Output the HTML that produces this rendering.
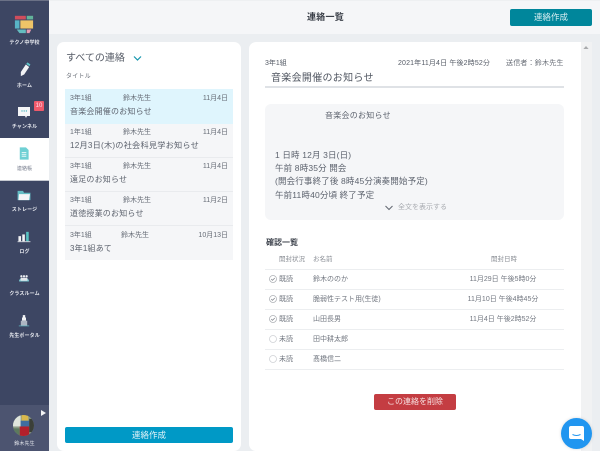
<!DOCTYPE html>
<html lang="ja"><head><meta charset="utf-8">
<style>
html,body{margin:0;padding:0;width:600px;height:451px;overflow:hidden;background:#ebeef1;font-family:"Liberation Sans","Noto Sans CJK JP",sans-serif;color:#555b66}
#p{position:absolute;left:0;top:0;width:600px;height:451px;overflow:hidden;background:#ebeef1}
#p div,#p span{position:absolute;white-space:nowrap;box-sizing:border-box}
svg{position:absolute;display:block}
.nav{left:0;width:49px;text-align:center;font-size:5px;font-weight:700;color:#e6e8ee;line-height:8px;letter-spacing:.1px}
.row{left:65px;width:168px;height:34px;background:#f5f6f8;border-bottom:1px solid #e9ebee}
.s{font-size:7px;line-height:10px;color:#666c76}
.t{left:5px;font-size:8px;line-height:13px;letter-spacing:.2px;color:#5d636e}
.b{font-size:8.5px;line-height:12px;color:#5d636e;left:275px;letter-spacing:.15px}
.tr{left:265px;width:299px;height:20px;border-bottom:1px solid #eceef0}
.c{font-size:7px;line-height:10px;color:#727780;top:5px}
</style></head><body><div id="p">
<!-- header -->
<div style="left:49px;top:0;width:551px;height:34px;background:#f5f6f8;border-top:1px solid #eef0f2"></div>
<div style="left:307px;top:11px;font-size:9px;line-height:12px;font-weight:700;letter-spacing:.25px;color:#3a3f48">連絡一覧</div>
<div style="left:510px;top:9px;width:82px;height:17px;background:#00869b;border-radius:2px;color:#d8eef2;font-size:8.5px;line-height:17px;text-align:center">連絡作成</div>

<!-- sidebar -->
<div style="left:0;top:0;width:49px;height:451px;background:#3d4663;border-top:1px solid #6b7186"></div>
<svg style="left:14px;top:14px" width="20" height="20" viewBox="0 0 22 20">
<path d="M1 1h12v4H1z" fill="#cf4d5c"/><path d="M14 1h7v4h-7z" fill="#62b39a"/>
<path d="M1 6h5v9H1z" fill="#58b4c6"/><path d="M7 6h14v9H7z" fill="#eec468"/>
<path d="M3 16h10v4H6z" fill="#64bcc0"/><path d="M14 16h5l-2 4h-3z" fill="#e59bb2"/>
</svg>
<div class="nav" style="top:39px">テクノ中学校</div>
<svg style="left:19px;top:62px" width="12" height="15" viewBox="0 0 14 18">
<path d="M2 12L8 3l4 3-6 9-4 2z" fill="#f2f3f5"/><path d="M8.500 2.200L10 .5l3.500 2.500-1.200 2z" fill="#5ec5c9"/>
</svg>
<div class="nav" style="top:82px">ホーム</div>
<svg style="left:17px;top:106px" width="14" height="13" viewBox="0 0 14 13">
<path d="M1 1h12v9h-3l-1 2-1-2H1z" fill="#f4f5f7"/><circle cx="5" cy="5" r=".7" fill="#55b9c2"/><circle cx="7.200" cy="5" r=".7" fill="#55b9c2"/><circle cx="9.400" cy="5" r=".7" fill="#55b9c2"/>
</svg>
<div style="left:34px;top:101px;width:10px;height:10px;background:#ef5a6b;border-radius:1px;color:#fde;font-size:6px;line-height:10px;text-align:center">10</div>
<div class="nav" style="top:123px">チャンネル</div>
<div style="left:0;top:138px;width:49px;height:43px;background:#fff;border-bottom:1px solid #c5c8d0"></div>
<svg style="left:19px;top:147px" width="10" height="13" viewBox="0 0 13 16">
<path d="M1 0h8l3.500 3.500V16H1z" fill="#6fd0d4"/><path d="M3.500 6.500h6M3.500 9h6M3.500 11.500h6" stroke="#fff" stroke-width="1"/>
</svg>
<div class="nav" style="top:165px;color:#7a8090;font-weight:400">連絡帳</div>
<svg style="left:17px;top:190px" width="14" height="11" viewBox="0 0 14 12">
<path d="M0 1h6l1 2h7v8H0z" fill="#63bcc4"/><path d="M1.500 4.500h12l-1 6.500H1z" fill="#f4f5f7"/>
</svg>
<div class="nav" style="top:206px">ストレージ</div>
<svg style="left:17px;top:231px" width="14" height="12" viewBox="0 0 15 14">
<path d="M1 6h3v6H1z" fill="#f2f3f5"/><path d="M5.500 4h3v8h-3z" fill="#f2f3f5"/><path d="M10 1h3v11h-3z" fill="#58c3c2"/><path d="M0 12.500h15" stroke="#dfe2e8"/>
</svg>
<div class="nav" style="top:248px">ログ</div>
<svg style="left:18px;top:274px" width="12" height="9" viewBox="0 0 15 12">
<path d="M1 8l2-2h9l2 2v2H1z" fill="#77c7cf"/><circle cx="4" cy="3" r="1.500" fill="#eef0f3"/><circle cx="7.500" cy="3" r="1.500" fill="#eef0f3"/><circle cx="11" cy="3" r="1.500" fill="#eef0f3"/><path d="M3 5h9v4H3z" fill="#e3e6ea"/>
</svg>
<div class="nav" style="top:290px">クラスルーム</div>
<svg style="left:18px;top:315px" width="12" height="13" viewBox="0 0 15 16">
<path d="M6 0h3v3H6z" fill="#f2f3f5"/><path d="M5 3h5v4H5z" fill="#f2f3f5"/><path d="M3.500 7h8v6h-8z" fill="#aeb6c2"/><path d="M1 13.500h13" stroke="#5fb0bb"/>
</svg>
<div class="nav" style="top:332px">先生ポータル</div>
<div style="left:0;top:405px;width:49px;height:46px;background:#4c5470"></div>
<svg style="left:41px;top:410px" width="5" height="6" viewBox="0 0 5 6"><path d="M0 0l5 3-5 3z" fill="#f3f4f6"/></svg>
<svg style="left:13px;top:415px" width="21" height="21" viewBox="0 0 22 22">
<defs><clipPath id="av"><circle cx="11" cy="11" r="11"/></clipPath></defs>
<g clip-path="url(#av)"><rect width="22" height="22" fill="#8a9a83"/><rect x="0" y="0" width="8" height="12" fill="#dfe5dc"/><rect x="9" y="0" width="7" height="6" fill="#d9b84c"/><rect x="8" y="6" width="9" height="6" fill="#3f6ea0"/><rect x="7" y="12" width="10" height="10" fill="#b3202c"/><rect x="0" y="14" width="7" height="8" fill="#5c7a5e"/><rect x="17" y="4" width="5" height="14" fill="#3b3f38"/></g>
</svg>
<div class="nav" style="top:440px;font-weight:400">鈴木先生</div>

<!-- left card -->
<div style="left:57px;top:42px;width:184px;height:409px;background:#fff;border-radius:7px"></div>
<div style="left:66px;top:51px;font-size:10px;line-height:15px;color:#555b66">すべての連絡</div>
<svg style="left:133px;top:55px" width="9" height="7" viewBox="0 0 9 7"><path d="M1 1.500l3.500 3.500L8 1.500" fill="none" stroke="#1596ad" stroke-width="1.200"/></svg>
<div style="left:66px;top:72px;font-size:6px;line-height:10px;letter-spacing:.2px;color:#6a6f78">タイトル</div>

<div class="row" style="top:89px;height:35px;background:#dff5fd;border:0"><span class="s" style="left:5px;top:5px">3年1組</span><span class="s" style="left:58px;top:5px">鈴木先生</span><span class="s" style="right:5px;top:5px">11月4日</span><span class="t" style="top:16px">音楽会開催のお知らせ</span></div>
<div class="row" style="top:124px"><span class="s" style="left:5px;top:4px">1年1組</span><span class="s" style="left:58px;top:4px">鈴木先生</span><span class="s" style="right:5px;top:4px">11月4日</span><span class="t" style="top:15px;font-size:8.200px">12月3日(木)の社会科見学お知らせ</span></div>
<div class="row" style="top:158px"><span class="s" style="left:5px;top:4px">3年1組</span><span class="s" style="left:58px;top:4px">鈴木先生</span><span class="s" style="right:5px;top:4px">11月4日</span><span class="t" style="top:15px">遠足のお知らせ</span></div>
<div class="row" style="top:192px"><span class="s" style="left:5px;top:4px">3年1組</span><span class="s" style="left:58px;top:4px">鈴木先生</span><span class="s" style="right:5px;top:4px">11月2日</span><span class="t" style="top:15px">道徳授業のお知らせ</span></div>
<div class="row" style="top:226px;border:0"><span class="s" style="left:5px;top:5px">3年1組</span><span class="s" style="left:56px;top:5px">鈴木先生</span><span class="s" style="right:5px;top:5px">10月13日</span><span class="t" style="top:16px">3年1組あて</span></div>

<div style="left:65px;top:427px;width:168px;height:16px;background:#0099c6;border-radius:2px;color:#e3f4f9;font-size:8.500px;line-height:16px;text-align:center">連絡作成</div>

<!-- right card -->
<div style="left:249px;top:42px;width:332px;height:409px;background:#fff;border-radius:7px 0 0 7px"></div>
<div style="left:581px;top:42px;width:11px;height:409px;background:#f1f2f3"></div>
<svg style="left:583px;top:46px" width="6" height="3" viewBox="0 0 7 4"><path d="M0 4l3.500-4L7 4z" fill="#a9abad"/></svg>

<div style="left:265px;top:59px;font-size:7px;line-height:10px;color:#555b66">3年1組</div>
<div style="left:398px;top:59px;font-size:7px;line-height:10px;letter-spacing:.15px;color:#555b66">2021年11月4日 午後2時52分</div>
<div style="left:506px;top:59px;font-size:7px;line-height:10px;letter-spacing:.2px;color:#6a6f78">送信者：鈴木先生</div>
<div style="left:271px;top:71px;font-size:10px;line-height:15px;letter-spacing:.3px;color:#4f5560">音楽会開催のお知らせ</div>
<div style="left:265px;top:86px;width:299px;height:2px;background:#dfe2e6"></div>

<div style="left:265px;top:104px;width:299px;height:116px;background:#f5f6f8;border-radius:6px"></div>
<div style="left:325px;top:110px;font-size:8px;line-height:12px;letter-spacing:.25px;color:#5d636e">音楽会のお知らせ</div>
<div class="b" style="top:149px">1 日時 12月 3日(日)</div>
<div class="b" style="top:162px">午前 8時35分 開会</div>
<div class="b" style="top:175px">(開会行事終了後 8時45分演奏開始予定)</div>
<div class="b" style="top:189px">午前11時40分頃 終了予定</div>
<svg style="left:385px;top:205px" width="8" height="6" viewBox="0 0 8 6"><path d="M.5 1L4 4.500 7.500 1" fill="none" stroke="#666b74" stroke-width="1.100"/></svg>
<div style="left:398px;top:202px;font-size:7px;line-height:11px;color:#a8abb0">全文を表示する</div>

<div style="left:266px;top:237px;font-size:8px;line-height:11px;font-weight:700;color:#3f444e">確認一覧</div>
<div style="left:279px;top:255px;font-size:6.500px;line-height:9px;color:#8b8f96">開封状況</div>
<div style="left:313px;top:255px;font-size:6.500px;line-height:9px;color:#8b8f96">お名前</div>
<div style="left:491px;top:255px;font-size:6.500px;line-height:9px;color:#8b8f96">開封日時</div>
<div style="left:265px;top:269px;width:299px;height:1px;background:#eceef0"></div>

<div class="tr" style="top:270px"><svg style="left:4px;top:5px" width="8" height="8" viewBox="0 0 8 8"><circle cx="4" cy="4" r="3.500" fill="none" stroke="#aeb1b6" stroke-width=".8"/><path d="M2.200 4l1.300 1.300L5.800 3" fill="none" stroke="#888c92" stroke-width=".8"/></svg><span class="c" style="left:14px">既読</span><span class="c" style="left:48px">鈴木ののか</span><span class="c" style="left:148px;width:180px;text-align:center">11月29日 午後5時0分</span></div>
<div class="tr" style="top:290px"><svg style="left:4px;top:5px" width="8" height="8" viewBox="0 0 8 8"><circle cx="4" cy="4" r="3.500" fill="none" stroke="#aeb1b6" stroke-width=".8"/><path d="M2.200 4l1.300 1.300L5.800 3" fill="none" stroke="#888c92" stroke-width=".8"/></svg><span class="c" style="left:14px">既読</span><span class="c" style="left:48px">脆弱性テスト用(生徒)</span><span class="c" style="left:148px;width:180px;text-align:center">11月10日 午後4時45分</span></div>
<div class="tr" style="top:310px"><svg style="left:4px;top:5px" width="8" height="8" viewBox="0 0 8 8"><circle cx="4" cy="4" r="3.500" fill="none" stroke="#aeb1b6" stroke-width=".8"/><path d="M2.200 4l1.300 1.300L5.800 3" fill="none" stroke="#888c92" stroke-width=".8"/></svg><span class="c" style="left:14px">既読</span><span class="c" style="left:48px">山田長男</span><span class="c" style="left:148px;width:180px;text-align:center">11月4日 午後2時52分</span></div>
<div class="tr" style="top:330px"><svg style="left:4px;top:5px" width="8" height="8" viewBox="0 0 8 8"><circle cx="4" cy="4" r="3.500" fill="none" stroke="#d0d2d6" stroke-width=".8"/></svg><span class="c" style="left:14px">未読</span><span class="c" style="left:48px">田中耕太郎</span></div>
<div class="tr" style="top:350px"><svg style="left:4px;top:5px" width="8" height="8" viewBox="0 0 8 8"><circle cx="4" cy="4" r="3.500" fill="none" stroke="#d0d2d6" stroke-width=".8"/></svg><span class="c" style="left:14px">未読</span><span class="c" style="left:48px">髙橋信二</span></div>

<div style="left:374px;top:394px;width:82px;height:16px;background:#c43d42;border-radius:2px;color:#f8e4e4;font-size:8px;line-height:16px;text-align:center">この連絡を削除</div>

<!-- chat -->
<div style="left:561px;top:418px;width:31px;height:31px;border-radius:50%;background:#2196f0;box-shadow:0 0 3px rgba(0,0,0,.15)"></div>
<svg style="left:568px;top:425px" width="17" height="17" viewBox="0 0 17 17"><path d="M3 1h11a2 2 0 0 1 2 2v13l-3-2H3a2 2 0 0 1-2-2V3a2 2 0 0 1 2-2z" fill="#fff"/><path d="M4.500 9.500q4 2 8 0" fill="none" stroke="#2196f0" stroke-width="1"/></svg>
</div></body></html>
